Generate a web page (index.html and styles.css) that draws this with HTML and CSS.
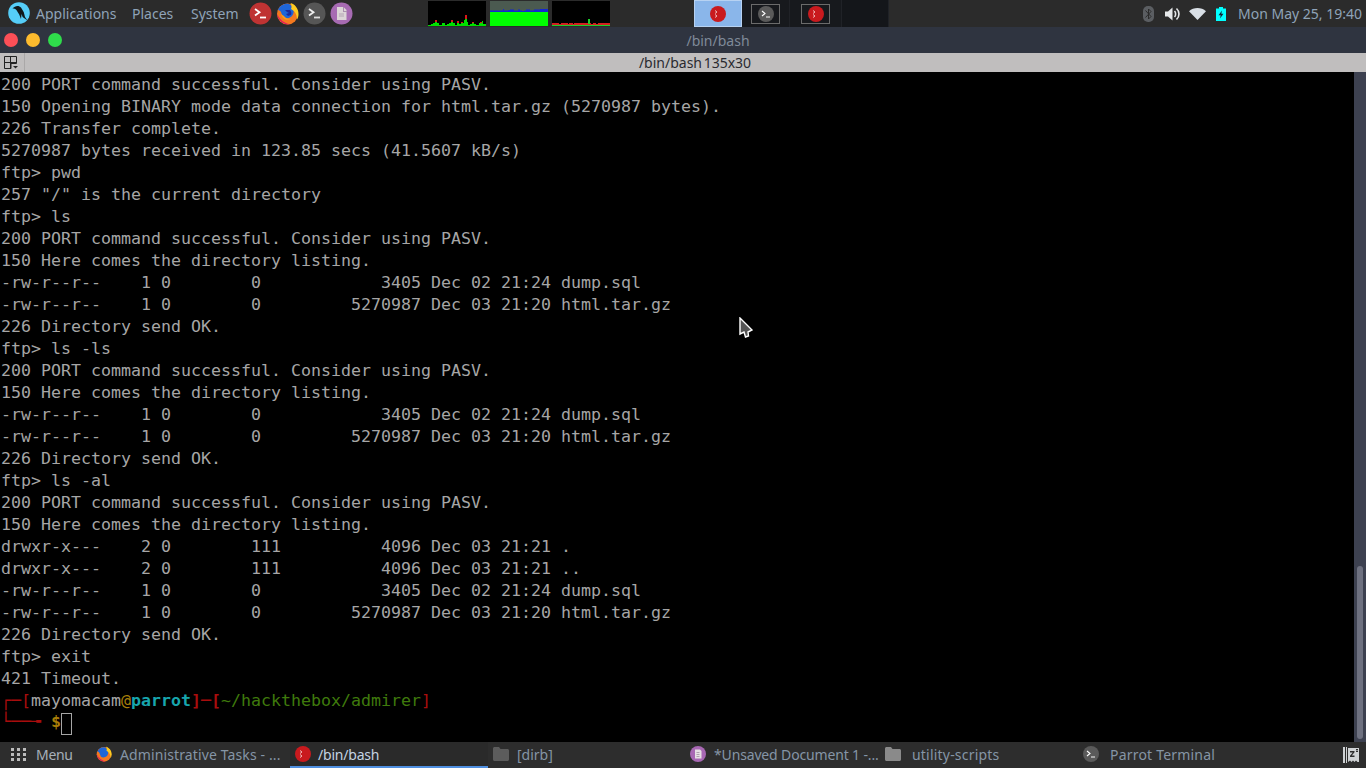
FILE: index.html
```html
<!DOCTYPE html>
<html lang="en">
<head>
<meta charset="utf-8">
<title>/bin/bash</title>
<link rel="stylesheet" href="styles.css">
</head>
<body>
<header class="top-panel">
  <div class="menus">
    <svg class="logo" viewBox="0 0 22 22"><circle cx="11" cy="11" r="10.800" fill="#55cdf8"/><path d="M4.500 6.500C7 3.500 11 3 13 5.600L15.800 10.200 17 15 19.500 18.500 14.600 15 13.600 12 13 17 11.200 12.500 8.400 8C7.400 6.800 6 6.500 4.500 6.500Z" fill="#10181c"/></svg>
    <span class="menu-app">Applications</span>
    <span class="menu-places">Places</span>
    <span class="menu-system">System</span>
  </div>
  <div class="launchers">
    <svg class="launcher" viewBox="0 0 23 23"><circle cx="11.500" cy="11.500" r="11" fill="#bf3333"/><path d="M6 7l4.500 3.200L6 13.400" fill="none" stroke="#fff" stroke-width="1.800"/><path d="M11 15.500h6" stroke="#fff" stroke-width="1.800"/></svg>
    <svg class="launcher" viewBox="0 0 23 23"><circle cx="11.500" cy="12" r="10.500" fill="#f4791f"/><path d="M1 12c1 7 7 11 13 10.500C8 21 4 18 1 12Z" fill="#e4175f"/><path d="M2 8C4 3 9 1 13 2c5 2 6 8 3 12-3 3-7 3-9 1-2-3-1-6-5-7Z" fill="#1f66d8"/><path d="M9 8h5c1 1 2 3 1 5l-3 1-2-2 3-1-2-1Z" fill="#1c2a9c"/><path d="M14.500 1c4 1 8 5 8 11 0 2-.5 4-1.500 5.500 0-6-3-9-6-10.500 1-2 .5-4-.5-6Z" fill="#ffcb20"/><path d="M5 12c1 5 6 7 10 5-3 0-6-1-7-3Z" fill="#fb9a1f"/></svg>
    <svg class="launcher" viewBox="0 0 23 23"><circle cx="11.500" cy="11.500" r="11" fill="#565656"/><path d="M6 7l4.500 3.200L6 13.400" fill="none" stroke="#eee" stroke-width="1.800"/><path d="M11 15.500h6" stroke="#ddd" stroke-width="1.800"/></svg>
    <svg class="launcher" viewBox="0 0 23 23"><circle cx="11.500" cy="11.500" r="11" fill="#a76bb3"/><path d="M7 5h6.500L16.500 8v10H7z" fill="#dcd5d8"/><path d="M13 5h1v4h3v1h-4z" fill="#a98fae"/><path d="M9 12h5M9 14h5" stroke="#b4a6b4" stroke-width="1"/></svg>
  </div>
  <div class="graphs">
    <svg class="graph" viewBox="0 0 58 25"><rect width="58" height="25" fill="#000"/><path d="M0 25V24H3V23H5V22H7V20H9V22H11V24H14V22H17V24H19V23H21V22H23V20H25V22H27V24H29V21H31V23H33V21H35V22H36V19H37V15H39V21H40V24H42V23H44V21H46V23H48V24H51V22H54V20H55V23H58V25Z" fill="#00e000"/><path d="M37 14H39V18H37ZM7 19H9V21H7ZM23 19H25V21H23ZM29 20H31V22H29ZM33 21H35V22H33ZM44 21H46V22H44ZM52 21H54V22H52Z" fill="#d81818"/></svg>
    <svg class="graph" viewBox="0 0 58 25"><rect width="58" height="25" fill="#4b5a50"/><rect y="11" width="58" height="14" fill="#0f0"/><path d="M0 11V9.500H13V8H14V9.500H18V9H20V8.500H24V9.500H28V8.500H30V9.500H32V10H34V9.500H36V8.500H40V9.500H44V8.500H50V8H58V11Z" fill="#1428d0"/></svg>
    <svg class="graph" viewBox="0 0 58 25"><rect width="58" height="25" fill="#000"/><path d="M0 25V22H7V23H9V22H16V23H17V22H21V23H22V22H36V23H37V22H39V23H41V22H44V23H46V22H58V25Z" fill="#d22020"/><path d="M36 23V18H38V23ZM0 24H58V25H0Z" fill="#1ccf2a"/></svg>
  </div>
  <div class="pager">
    <div class="workspace workspace-active"><svg class="ws-icon" viewBox="0 0 16 16"><circle cx="8" cy="8" r="8" fill="#c91a1e"/><path d="M5 4.500l2 1.500-2 1.500M5 8.500l2 1.500-2 1.500" fill="none" stroke="#f4c8c8" stroke-width="0.900"/></svg></div>
    <div class="workspace"><div class="ws-window"><svg class="ws-icon" viewBox="0 0 16 16"><circle cx="8" cy="8" r="8" fill="#5a5a5a"/><path d="M4 5l3 2.500-3 2.500" fill="none" stroke="#fff" stroke-width="1.100"/><path d="M8 11h4" stroke="#ddd" stroke-width="1.200"/></svg></div></div>
    <div class="workspace workspace-wide"><div class="ws-window"><svg class="ws-icon" viewBox="0 0 16 16"><circle cx="8" cy="8" r="8" fill="#c91a1e"/><path d="M5 4.500l2 1.500-2 1.500M5 8.500l2 1.500-2 1.500" fill="none" stroke="#f4c8c8" stroke-width="0.900"/></svg></div></div>
    <div class="workspace workspace-empty"></div>
  </div>
  <div class="tray">
    <svg class="tray-bt" viewBox="0 0 11 16"><rect width="11" height="16" rx="5" fill="#5b5e62"/><path d="M2.500 4.500L8 10.500 5.500 13V3L8 5.500 2.500 11.500" fill="none" stroke="#2b2b2b" stroke-width="1"/></svg>
    <svg class="tray-vol" viewBox="0 0 16 14"><path d="M0 4.500H3L7.500 0.500V13.500L3 9.500H0Z" fill="#e6e8ea"/><path d="M9.500 4C11 5.500 11 8.500 9.500 10M11.500 1.500C14.800 4.500 14.800 9.500 11.500 12.500" fill="none" stroke="#e6e8ea" stroke-width="1.600"/></svg>
    <svg class="tray-wifi" viewBox="0 0 17 12"><path d="M0 3.200C4.500-1 12.500-1 17 3.200L8.500 12Z" fill="#d9dfe6"/></svg>
    <svg class="tray-bat" viewBox="0 0 10 14"><path d="M3 0H7V1.500H10V14H0V1.500H3Z" fill="#0ff"/><path d="M6 3.500L2.500 8.200H4.700L4 11.500 7.500 6.800H5.300Z" fill="#123"/></svg>
    <span class="clock">Mon May 25, 19:40</span>
  </div>
</header>

<div class="titlebar">
  <div class="lights">
    <span class="light light-red"></span>
    <span class="light light-yellow"></span>
    <span class="light light-green"></span>
  </div>
  <span class="title">/bin/bash</span>
</div>

<div class="term-menu">
  <div class="term-menu-btn">
    <svg class="split-icon" viewBox="0 0 14 14"><path d="M.5.500H12.500V7.500H7V12.500H.5ZM.5 6.500H12.500M6.500.500V12.500" fill="none" stroke="#222" stroke-width="1"/><path d="M9 10H14L11.500 12.500Z" fill="#222"/></svg>
  </div>
  <span class="term-title">/bin/bash 135x30</span>
</div>

<main class="terminal">
  <div class="screen">
    <div class="line">200 PORT command successful. Consider using PASV.</div>
    <div class="line">150 Opening BINARY mode data connection for html.tar.gz (5270987 bytes).</div>
    <div class="line">226 Transfer complete.</div>
    <div class="line">5270987 bytes received in 123.85 secs (41.5607 kB/s)</div>
    <div class="line">ftp&gt; pwd</div>
    <div class="line">257 "/" is the current directory</div>
    <div class="line">ftp&gt; ls</div>
    <div class="line">200 PORT command successful. Consider using PASV.</div>
    <div class="line">150 Here comes the directory listing.</div>
    <div class="line">-rw-r--r--    1 0        0            3405 Dec 02 21:24 dump.sql</div>
    <div class="line">-rw-r--r--    1 0        0         5270987 Dec 03 21:20 html.tar.gz</div>
    <div class="line">226 Directory send OK.</div>
    <div class="line">ftp&gt; ls -ls</div>
    <div class="line">200 PORT command successful. Consider using PASV.</div>
    <div class="line">150 Here comes the directory listing.</div>
    <div class="line">-rw-r--r--    1 0        0            3405 Dec 02 21:24 dump.sql</div>
    <div class="line">-rw-r--r--    1 0        0         5270987 Dec 03 21:20 html.tar.gz</div>
    <div class="line">226 Directory send OK.</div>
    <div class="line">ftp&gt; ls -al</div>
    <div class="line">200 PORT command successful. Consider using PASV.</div>
    <div class="line">150 Here comes the directory listing.</div>
    <div class="line">drwxr-x---    2 0        111          4096 Dec 03 21:21 .</div>
    <div class="line">drwxr-x---    2 0        111          4096 Dec 03 21:21 ..</div>
    <div class="line">-rw-r--r--    1 0        0            3405 Dec 02 21:24 dump.sql</div>
    <div class="line">-rw-r--r--    1 0        0         5270987 Dec 03 21:20 html.tar.gz</div>
    <div class="line">226 Directory send OK.</div>
    <div class="line">ftp&gt; exit</div>
    <div class="line">421 Timeout.</div>
    <div class="line"><span class="p-red p-box">┌─</span><span class="p-red">[</span>mayomacam<span class="p-yellow">@</span><span class="p-host">parrot</span><span class="p-red p-box">]─[</span><span class="p-green">~/hackthebox/admirer</span><span class="p-red">]</span></div>
    <div class="line line-input"><span class="p-red p-box">└──╼ </span><span class="p-yellow p-dollar">$</span><span class="cursor"> </span></div>
  </div>
  <div class="scrollbar"><div class="scroll-thumb"></div></div>
  <svg class="pointer" viewBox="0 0 14 22"><path d="M1 1V17L5 15 6.500 20 9.500 19 9 15 13 13Z" fill="#555" stroke="#fff" stroke-width="1.400"/></svg>
</main>

<footer class="bottom-panel">
  <div class="start">
    <svg class="grid-icon" viewBox="0 0 16 14"><path d="M0 1h3v3H0zM6 1h3v3H6zM12 1h3v3h-3zM0 6h3v3H0zM6 6h3v3H6zM12 6h3v3h-3zM0 11h3v3H0zM6 11h3v3H6zM12 11h3v3h-3z" fill="#bcbcbc"/></svg>
    <span class="start-label">Menu</span>
  </div>
  <div class="task task-1">
    <svg class="task-icon" viewBox="0 0 23 23"><circle cx="11.500" cy="12" r="10.500" fill="#f4791f"/><path d="M1 12c1 7 7 11 13 10.500C8 21 4 18 1 12Z" fill="#e4175f"/><path d="M2 8C4 3 9 1 13 2c5 2 6 8 3 12-3 3-7 3-9 1-2-3-1-6-5-7Z" fill="#1f66d8"/><path d="M14.500 1c4 1 8 5 8 11 0 2-.5 4-1.500 5.500 0-6-3-9-6-10.500 1-2 .5-4-.5-6Z" fill="#ffcb20"/></svg>
    <span>Administrative Tasks - ...</span>
  </div>
  <div class="task task-2 task-active">
    <svg class="task-icon" viewBox="0 0 16 16"><circle cx="8" cy="8" r="8" fill="#c91a1e"/><path d="M5 4.500l2 1.500-2 1.500M5 8.500l2 1.500-2 1.500" fill="none" stroke="#f4c8c8" stroke-width="0.900"/></svg>
    <span>/bin/bash</span>
  </div>
  <div class="task task-3">
    <svg class="task-icon" viewBox="0 0 16 14"><path d="M0 1.500C0 .700.700 0 1.500 0H6L7.500 2H14.500C15.300 2 16 2.700 16 3.500V12.500C16 13.300 15.300 14 14.500 14H1.500C.700 14 0 13.300 0 12.500Z" fill="#5c5c5c"/></svg>
    <span>[dirb]</span>
  </div>
  <div class="task task-4">
    <svg class="task-icon" viewBox="0 0 16 16"><circle cx="8" cy="8" r="8" fill="#a868b4"/><path d="M5 3.500H10L11.500 5V12.500H5Z" fill="#e6e0e4"/><path d="M6.500 6.500h3M6.500 8.500h3M6.500 10.500h3" stroke="#a898a8" stroke-width="0.900"/></svg>
    <span>*Unsaved Document 1 -...</span>
  </div>
  <div class="task task-5">
    <svg class="task-icon" viewBox="0 0 16 14"><path d="M0 1.500C0 .700.700 0 1.500 0H6L7.500 2H14.500C15.300 2 16 2.700 16 3.500V12.500C16 13.300 15.300 14 14.500 14H1.500C.700 14 0 13.300 0 12.500Z" fill="#8a8a8a"/></svg>
    <span>utility-scripts</span>
  </div>
  <div class="task task-6">
    <svg class="task-icon" viewBox="0 0 16 16"><circle cx="8" cy="8" r="8" fill="#5a5a5a"/><path d="M4 5l3 2.500-3 2.500" fill="none" stroke="#fff" stroke-width="1.100"/><path d="M8 11h4" stroke="#ddd" stroke-width="1.200"/></svg>
    <span>Parrot Terminal</span>
  </div>
  <svg class="sleep-icon" viewBox="0 0 18 18"><path d="M1 1H3V17H1ZM4 1H5V17H4Z" fill="#cfd2d4"/><path d="M6 2H17V16H15.500L14 14.500 12.500 16 11 14.500 9.500 16 8 14.500 6 16Z" fill="#cfd2d4"/><path d="M8 5H12.500V6.200L9.800 9.500H12.500V11H8V9.800L10.700 6.500H8ZM14 3H16V3.800L15 5H16V6H14V5.200L15 4H14Z" fill="#2d2d2d"/></svg>
</footer>
</body>
</html>
```
FILE: styles.css
```css
* { box-sizing: border-box; }
html, body { margin: 0; padding: 0; width: 1366px; height: 768px; overflow: hidden; }
body { display: flex; flex-direction: column; background: #000; font-family: "Noto Sans", sans-serif; font-size: 14px; color: #8fa3b8; }
svg { display: block; flex: none; }

.top-panel { height: 27px; flex: none; display: flex; align-items: center; background: #2b2b2b; }
.menus { display: flex; align-items: center; padding-left: 8px; width: 249px; }
.logo { width: 22px; height: 22px; margin-top: -1px; }
.menu-app { margin-left: 6px; width: 96px; }
.menu-places { width: 59px; }
.launchers { display: flex; gap: 4px; width: 179px; }
.launcher { width: 23px; height: 23px; }
.graphs { display: flex; gap: 4px; width: 266px; height: 27px; padding-top: 1px; }
.graph { width: 58px; height: 25px; }
.pager { display: flex; width: 195px; height: 27px; background: #17191d; }
.workspace { width: 48px; height: 27px; display: flex; align-items: center; justify-content: center; border-right: 1px solid #202227; }
.workspace-active { background: #8ab6ea; border: 1px solid #b7d2f2; }
.workspace-wide { width: 52px; }
.workspace-empty { width: 47px; background: #14161a; }
.ws-window { width: 29px; height: 20px; border: 1px solid #6b6b6b; display: flex; align-items: center; justify-content: center; }
.ws-icon { width: 16px; height: 16px; }
.tray { display: flex; align-items: center; margin-left: auto; padding-right: 4px; }
.tray-bt { width: 11px; height: 16px; margin-right: 11px; }
.tray-vol { width: 16px; height: 14px; margin-right: 8px; }
.tray-wifi { width: 17px; height: 12px; margin-right: 10px; }
.tray-bat { width: 10px; height: 14px; margin-right: 12px; }

.titlebar { height: 26px; flex: none; display: flex; align-items: center; position: relative; background: #2f3440; }
.lights { display: flex; gap: 8px; padding-left: 4px; }
.light { width: 14px; height: 14px; border-radius: 50%; }
.light-red { background: #fc4f57; }
.light-yellow { background: #fdbb2e; }
.light-green { background: #2fdc4b; }
.title { position: absolute; left: 70px; right: 0; text-align: center; color: #7f8a99; }

.term-menu { height: 19px; flex: none; display: flex; align-items: center; position: relative; background: #c0bebe; color: #222; }
.term-menu-btn { width: 25px; height: 19px; padding: 3px 0 0 4px; border-right: 1px solid #aaa8a8; }
.split-icon { width: 14px; height: 14px; }
.term-title { position: absolute; left: 24px; right: 0; text-align: center; color: #2a2a30; word-spacing: -2px; }

.terminal { flex: 1; min-height: 0; display: flex; position: relative; background: #000; }
.screen { flex: 1; padding: 1px 0 0 1px; font-family: "DejaVu Sans Mono", monospace; font-size: 16.62px; color: #a6a6a6; }
.line { height: 22px; line-height: 24px; white-space: pre; }
.p-red { color: #a80d0d; }
.p-box { font-weight: 700; }
.p-yellow { color: #a87e08; }
.p-dollar { font-weight: 700; }
.p-host { color: #17a5ad; font-weight: 700; }
.p-green { color: #3f7a0c; }
.cursor { display: inline-block; width: 11px; height: 22px; vertical-align: -3px; border: 1px solid #a6a6a6; }
.line-input { line-height: 22px; }
.scrollbar { width: 12px; flex: none; background: #3d4150; padding: 494px 3px 0 3px; }
.scroll-thumb { height: 173px; border-radius: 3px; background: #6e7180; }
.pointer { position: absolute; left: 739px; top: 245px; width: 14px; height: 22px; }

.bottom-panel { height: 26px; flex: none; display: flex; align-items: center; position: relative; background: #2d2d2d; color: #8595a6; }
.start { display: flex; align-items: center; gap: 9px; padding: 0 0 2px 11px; width: 90px; height: 26px; color: #a7b0ba; }
.start-label { letter-spacing: -0.3px; }
.grid-icon { width: 16px; height: 14px; }
.task { height: 26px; display: flex; align-items: center; gap: 8px; padding-left: 7px; padding-bottom: 2px; }
.task-icon { width: 16px; height: 16px; }
.task-1 { width: 200px; padding-left: 6px; letter-spacing: 0.12px; }
.task-2 { width: 198px; padding-left: 5px; gap: 7px; letter-spacing: -0.2px; }
.task-3 { width: 199px; padding-left: 5px; }
.task-4 { width: 198px; padding-left: 3px; letter-spacing: -0.15px; }
.task-5 { width: 198px; gap: 8px; padding-left: 0; letter-spacing: 0.2px; }
.task-6 { width: 200px; padding-left: 0; letter-spacing: 0.2px; }
.task-5 span, .task-6 span { margin-left: 3px; }
.task-active { color: #c4d3e2; border-bottom: 2px solid #4f8fe0; padding-bottom: 0; background: #2a2a2a; }
.sleep-icon { position: absolute; right: 6px; top: 4px; width: 18px; height: 18px; }
```
